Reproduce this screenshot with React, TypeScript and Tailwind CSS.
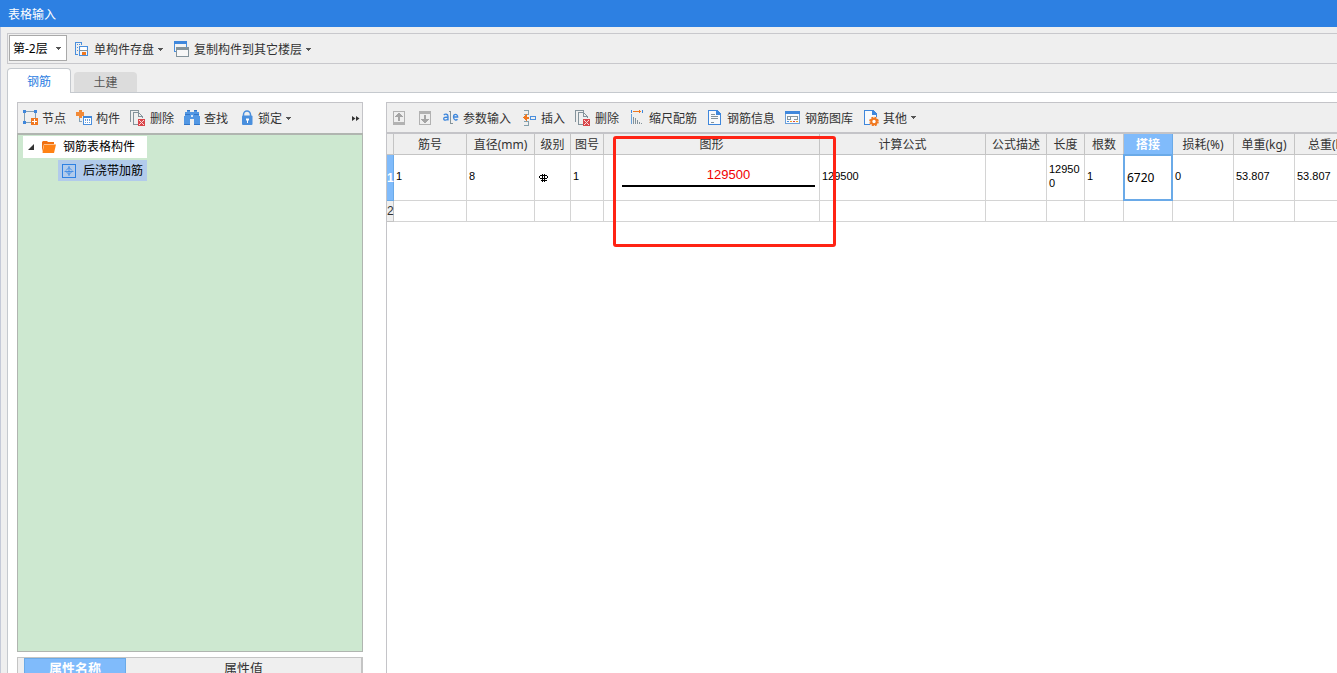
import type { ReactNode } from "react";

const Icon = ({ children }: { children: ReactNode }) => (
  <svg viewBox="0 0 16 16" className="size-4 shrink-0" shapeRendering="crispEdges" fill="none" aria-hidden="true">
    {children}
  </svg>
);

const Caret = () => (
  <svg viewBox="0 0 6 3" className="h-[3px] w-1.5 shrink-0" fill="#555" shapeRendering="crispEdges" aria-hidden="true">
    <path d="M0 0H5V1H4V2H3V3H2V2H1V1H0Z" />
  </svg>
);

const SaveIcon = () => (
  <Icon>
    <path d="M1.5 13.5V1.5H7.5V4M1.5 13.5H4" stroke="#4a8fdd" />
    <path d="M3 3h1v1H3zM3 6h1v1H3zM3 9h1v1H3zM5 3h1v1H5z" fill="#4a8fdd" />
    <path d="M5.5 5.5H13.5V14.5H5.5Z" fill="#f4f8fc" stroke="#4a8fdd" />
    <path d="M7 6H12V9H7Z" fill="#fff" />
    <path d="M5 9H14V10H5Z" fill="#84939b" />
    <path d="M8 11H12V14H8Z" fill="#f07820" />
  </Icon>
);

const CopyIcon = () => (
  <Icon>
    <path d="M.5 .5H12.5V10.5H.5Z" fill="#f4f4f4" stroke="#4a8fdd" />
    <path d="M0 0H13V3H0Z" fill="#3f87dc" />
    <path d="M2 6H15V16H2Z" fill="#efefef" />
    <path d="M2.5 6.5H14.5V15.5H2.5Z" fill="#f7f7f7" stroke="#84939b" />
    <path d="M2 6H15V9H2Z" fill="#84939b" />
  </Icon>
);

const NodeIcon = () => (
  <Icon>
    <path d="M2.5 1.5H13.5V8M2.5 1.5V12.5H9" stroke="#84a0b4" />
    <path d="M1 0H4V3H1ZM12 0H15V3H12ZM1 11H4V14H1Z" fill="#3f87dc" />
    <path d="M9 8H16V15H9Z" fill="#f07820" />
    <path d="M12 9H13V11H15V12H13V14H12V12H10V11H12Z" fill="#fff" />
  </Icon>
);

const ComponentIcon = () => (
  <Icon>
    <path d="M3 0H6V2H8V6H6V8H3V6H0V2H3Z" fill="#f28a38" />
    <path d="M3.5 8V11.5H6" stroke="#84a0b4" />
    <path d="M7.5 6.5H15.5V14.5H7.5Z" fill="#fff" stroke="#4a8fdd" />
    <path d="M7 6H16V8H7Z" fill="#3f87dc" />
    <path d="M9 9h1v2H9zM11 9h1v2h-1zM13 9h1v2h-1zM9 12h1v1H9zM11 12h1v1h-1zM13 12h1v1h-1z" fill="#6b9fda" />
  </Icon>
);

const DeleteIcon = () => (
  <Icon>
    <path d="M.5 11.5V.5H8.5V2" stroke="#84939b" />
    <path d="M3.5 14.5V2.5H8.5L12.5 6.5V8M3.5 14.5H8" stroke="#84939b" />
    <path d="M8.5 2.5V6.5H12.5" stroke="#84939b" />
    <path d="M8 9H15V16H8Z" fill="#d9454a" />
    <path d="M9 10h1v1h1v1h1v-1h1v-1h1v1h-1v1h-1v1h1v1h1v1h-1v-1h-1v-1h-1v1h-1v1H9v-1h1v-1h1v-1h-1v-1H9z" fill="#f8dcdc" />
  </Icon>
);

const FindIcon = () => (
  <Icon>
    <path d="M3 0H6V2H10V0H13V2H15V6H16V15H10V9H6V15H0V6H1V2H3Z" fill="#5297e3" />
    <path d="M7 5H9V7H7Z" fill="#d6e6f8" />
    <path d="M3 0H6V1H3ZM10 0H13V1H10ZM1 4H6V5H1ZM10 4H15V5H10Z" fill="#3276c8" />
    <path d="M0 14H6V15H0ZM10 14H16V15H10Z" fill="#3276c8" />
  </Icon>
);

const LockIcon = () => (
  <svg viewBox="0 0 16 16" className="size-4 shrink-0" fill="none" aria-hidden="true">
    <path d="M5.5 7V4.5a3.5 3.5 0 0 1 7 0V7" stroke="#4a8fdd" strokeWidth="1.5" />
    <rect x="4" y="5.5" width="10.5" height="9.5" rx="1" fill="#4a8fdd" />
    <path d="M8 8.5h3v2H10v2.5H9v-2.5H8z" fill="#fff" />
  </svg>
);

const ArrowIcon = ({ down = false }: { down?: boolean }) => (
  <Icon>
    <path d="M2.5 1.5H13.5V14.5H2.5Z" stroke="#b2b2b2" />
    {down ? (
      <>
        <path d="M2 1H14V4H2Z" fill="#b2b2b2" />
        <path d="M7 5H9V9H12V10H11V11H10V12H9V13H7V12H6V11H5V10H4V9H7Z" fill="#a5a5a5" />
      </>
    ) : (
      <>
        <path d="M2 12H14V15H2Z" fill="#b2b2b2" />
        <path d="M7 3H9V4H10V5H11V6H12V7H9V11H7V7H4V6H5V5H6V4H7Z" fill="#a5a5a5" />
      </>
    )}
  </Icon>
);

const ParamIcon = () => (
  <svg viewBox="0 0 16 16" className="size-4 shrink-0" fill="none" aria-hidden="true">
    <path d="M.8 5C2 3.8 5 3.8 5 6.2V10.5M5 7C2 7 .7 7.5 .7 8.8c0 2 3.3 1.7 4.3-.3" stroke="#3f87dc" strokeWidth="1.3" />
    <path d="M10.5 7h4.2c0-3.4-4.2-3.4-4.2 0 0 3.4 3 3.4 4 2.3" stroke="#3f87dc" strokeWidth="1.3" />
    <path d="M6 1.5H7.5V13.5M9.5 13.5H7.5" stroke="#84939b" shapeRendering="crispEdges" />
  </svg>
);

const InsertIcon = () => (
  <Icon>
    <path d="M3 .5H7.5V4.5H3M3 11.5H7.5V15.5H3" stroke="#84a0ac" />
    <path d="M2 7H3V6H4V5H5V4H6V7H8V9H6V11H5V10H4V9H3V8H2Z" fill="#f07820" />
    <path d="M9.5 6.5H14.5V9.5H9.5Z" stroke="#4a8fdd" />
  </Icon>
);

const ScaleIcon = () => (
  <Icon>
    <path d="M2.5 0V3M13.5 0V3" stroke="#3f87dc" />
    <path d="M4 1H10V0H11V1H12V2H11V3H10V2H4Z" fill="#f07820" />
    <path d="M4.5 7V14M6.5 8V14M8.5 10V14M10.5 12V14M12.5 13V14" stroke="#84939b" />
    <path d="M2.5 4V14" stroke="#6aa0d8" />
  </Icon>
);

const InfoIcon = () => (
  <Icon>
    <path d="M1.5 .5H9.5L13.5 4.5V14.5H1.5Z" fill="#f8fafc" stroke="#3f87dc" />
    <path d="M9 0H10L14 4V5H9Z" fill="#3f87dc" />
    <path d="M4 4.5H8M4 6.5H11M4 8.5H11M4 12.5H7" stroke="#84939b" />
  </Icon>
);

const LibraryIcon = () => (
  <Icon>
    <path d="M.5 1.5H14.5V13.5H.5Z" fill="#f8fafc" stroke="#6b9fda" />
    <path d="M0 1H15V4H0Z" fill="#3f87dc" />
    <path d="M2 9.5H5.5V6.5H2.5V9M5 6.5H12.5V9.5H9" stroke="#84939b" />
    <path d="M2 11H4V12H2Z" fill="#4a8fdd" />
    <path d="M5 11H7V12H5ZM11 11H13V12H11Z" fill="#f0a020" />
    <path d="M8 11H10V12H8Z" fill="#d9454a" />
  </Icon>
);

const OtherIcon = () => (
  <svg viewBox="0 0 16 16" className="size-4 shrink-0" fill="none" aria-hidden="true">
    <g shapeRendering="crispEdges">
      <path d="M7 14.5H1.5V.5H9.5L13.5 4.5V7" fill="#f8fafc" stroke="#3f87dc" />
      <path d="M9 0H10L14 4V5H9Z" fill="#3f87dc" />
    </g>
    <circle cx="11" cy="11.5" r="4" stroke="#f07820" strokeWidth="1.6" strokeDasharray="2 1.14" />
    <circle cx="11" cy="11.5" r="2.7" fill="#fff" stroke="#f07820" strokeWidth="2" />
  </svg>
);

const RebarGradeIcon = () => (
  <svg viewBox="0 0 10 10" className="mt-1 ml-0.5 size-2.5" fill="none" stroke="#000" shapeRendering="crispEdges" role="img" aria-label="钢筋级别">
    <path d="M1 2.5H8M1 5.5H8M.5 3V5M8.5 3V5M3.5 1V9M5.5 1V9M2 7.5H8" />
  </svg>
);

const ToolButton = ({ icon, label, menu = false }: { icon: ReactNode; label: string; menu?: boolean }) => (
  <button type="button" className="flex shrink-0 items-center gap-1 whitespace-nowrap text-[#333]">
    {icon}
    <span className="pt-0.5">{label}</span>
    {menu && <Caret />}
  </button>
);

const columns = [
  { name: "筋号", width: "w-[73px]", value: "1" },
  { name: "直径(mm)", width: "w-[68px]", value: "8" },
  { name: "级别", width: "w-[36px]", value: "" },
  { name: "图号", width: "w-[33px]", value: "1" },
  { name: "图形", width: "w-[216px]", value: "129500" },
  { name: "计算公式", width: "w-[166px]", value: "129500" },
  { name: "公式描述", width: "w-[61px]", value: "" },
  { name: "长度", width: "w-[38px]", value: "129500" },
  { name: "根数", width: "w-[39px]", value: "1" },
  { name: "搭接", width: "w-[49px]", value: "6720" },
  { name: "损耗(%)", width: "w-[61px]", value: "0" },
  { name: "单重(kg)", width: "w-[61px]", value: "53.807" },
  { name: "总重(kg)", width: "w-[72px]", value: "53.807" },
];

const CellContent = ({ name, value }: { name: string; value: string }) => {
  if (name === "级别") return <RebarGradeIcon />;
  if (name === "图形")
    return (
      <div className="ml-4 border-b-2 border-black pt-0.5 pb-0.5 pl-5 text-center text-[13px] leading-4 text-[#f00000]">{value}</div>
    );
  if (name === "搭接")
    return (
      <input
        aria-label="搭接"
        defaultValue={value}
        className="absolute -top-px -left-px h-[47px] w-[50px] border-2 border-[#6aaae8] bg-white px-0.5 font-['Noto_Sans'] text-[12px] text-black outline-none"
      />
    );
  return <>{value}</>;
};

export default function App() {
  return (
    <div className="flex h-screen flex-col overflow-hidden bg-[#efefef] font-['Noto_Sans','Noto_Sans_CJK_SC',sans-serif] text-[12px] leading-4 text-[#333]">
      <header className="flex h-[27px] shrink-0 items-center bg-[#2d80e2] px-2 pt-0.5 text-white">
        <h1>表格输入</h1>
      </header>

      <div className="flex min-h-0 flex-1 flex-col border-l border-[#c5cad8] pt-1.5 pl-1.5">
        <div className="flex h-[31px] shrink-0 items-center gap-2.5 border-y border-l border-[#c8c8cc] pt-px pl-px">
          <div className="relative -mr-[3px] flex h-[26px] w-[58px] shrink-0 items-center self-start">
            <select aria-label="楼层" className="size-full appearance-none border border-[#a9a9a9] bg-white pt-0.5 pl-[3px] text-black outline-none">
              <option>第-2层</option>
            </select>
            <span className="pointer-events-none absolute right-[5px] flex">
              <Caret />
            </span>
          </div>
          <ToolButton icon={<SaveIcon />} label="单构件存盘" menu />
          <ToolButton icon={<CopyIcon />} label="复制构件到其它楼层" menu />
        </div>

        <div role="tablist" className="flex h-[29px] shrink-0 items-end pt-1">
          <button type="button" role="tab" aria-selected="true" className="h-[25px] w-16 rounded-t-sm border-x border-t border-[#c5c9ce] bg-white pt-0.5 text-[#2d80e2]">
            钢筋
          </button>
          <div className="flex h-full flex-1 items-end border-b border-[#c5c9ce] pl-[3px]">
            <button type="button" role="tab" aria-selected="false" className="h-5 w-[63px] rounded-t-sm bg-[#dcdcdc] pt-0.5 text-[#555]">
              土建
            </button>
          </div>
        </div>

        <main className="flex min-h-0 flex-1 gap-[23px] border-l border-[#c5c9ce] bg-white pt-[9px] pl-[9px]">
          <section className="flex w-[346px] shrink-0 flex-col">
            <div className="flex h-[31px] shrink-0 items-center gap-2.5 border border-b-0 border-[#c4c4c8] bg-[#efefef] pr-0.5 pl-1">
              <ToolButton icon={<NodeIcon />} label="节点" />
              <ToolButton icon={<ComponentIcon />} label="构件" />
              <ToolButton icon={<DeleteIcon />} label="删除" />
              <ToolButton icon={<FindIcon />} label="查找" />
              <ToolButton icon={<LockIcon />} label="锁定" menu />
              <button type="button" aria-label="更多" className="ml-auto">
                <svg viewBox="0 0 8 5" className="h-[5px] w-2" fill="#333" aria-hidden="true">
                  <path d="M0 0L3.5 2.5L0 5ZM4 0L7.5 2.5L4 5Z" />
                </svg>
              </button>
            </div>

            <div role="tree" className="flex flex-1 flex-col items-start gap-0.5 border border-t-2 border-[#b0b5b0] bg-[#cde8d0] pt-px pl-[5px] text-black">
              <div role="treeitem" aria-expanded="true" className="flex h-[22px] items-center bg-white pr-3 pl-1">
                <svg viewBox="0 0 8 8" className="mr-1.5 size-2" fill="#333" aria-hidden="true">
                  <path d="M7 1V7H1Z" />
                </svg>
                <svg viewBox="0 0 16 16" className="mr-1.5 size-4" aria-hidden="true">
                  <path d="M1 13V3L2 2H6L7 3H13V5H3Z" fill="#f07010" />
                  <path d="M3 5.5H15L13 14H1.5Z" fill="#ff8214" />
                </svg>
                钢筋表格构件
              </div>
              <div role="treeitem" aria-selected="true" className="ml-[35px] flex h-[21px] items-center gap-[7px] bg-[#b2cbeb] pr-1 pl-1">
                <svg viewBox="0 0 14 14" className="size-3.5" fill="none" stroke="#2d80e2" aria-hidden="true">
                  <rect x=".5" y=".5" width="13" height="13" />
                  <path d="M7 2V12M2.5 7.5H11.5M4 6.5L7 3.5L10 6.5M4.5 8L7 10.5L9.5 8" strokeWidth=".8" />
                </svg>
                后浇带加筋
              </div>
            </div>

            <div className="mt-[5px] h-4 shrink-0 overflow-hidden border-x border-t border-[#c4c4c4] bg-[#efefef]">
              <table className="w-full table-fixed border-separate border-spacing-0 text-[13px]">
                <thead>
                  <tr className="h-[19px]">
                    <td className="w-1.5 p-0" />
                    <th scope="col" className="w-[102px] border border-[#6aaae8] bg-[#80bbfb] p-0 font-bold text-white">属性名称</th>
                    <th scope="col" className="border-r border-[#c4c4c4] p-0 font-normal">属性值</th>
                  </tr>
                </thead>
              </table>
            </div>
          </section>

          <section className="flex min-w-0 flex-1 flex-col border-l border-[#c4c4c8]">
            <div className="flex h-8 shrink-0 items-center gap-2.5 overflow-hidden border-t border-b-2 border-[#c4c4c8] bg-[#efefef] pl-1">
              <button type="button" aria-label="上移">
                <ArrowIcon />
              </button>
              <button type="button" aria-label="下移">
                <ArrowIcon down />
              </button>
              <ToolButton icon={<ParamIcon />} label="参数输入" />
              <ToolButton icon={<InsertIcon />} label="插入" />
              <ToolButton icon={<DeleteIcon />} label="删除" />
              <ToolButton icon={<ScaleIcon />} label="缩尺配筋" />
              <ToolButton icon={<InfoIcon />} label="钢筋信息" />
              <ToolButton icon={<LibraryIcon />} label="钢筋图库" />
              <ToolButton icon={<OtherIcon />} label="其他" menu />
            </div>

            <div className="relative min-h-0 flex-1 overflow-hidden">
              <table className="w-[980px] table-fixed border-separate border-spacing-0">
                <colgroup>
                  <col className="w-[7px]" />
                  {columns.map((c) => (
                    <col key={c.name} className={c.width} />
                  ))}
                </colgroup>
                <thead>
                  <tr className="h-[21px] bg-[#efefef]">
                    <td className="border-r border-b border-[#c4c4c4] p-0" />
                    {columns.map((c) => (
                      <th
                        key={c.name}
                        scope="col"
                        className={
                          c.name === "搭接"
                            ? "border-r border-b border-[#6aaae8] bg-[#80bbfb] px-0 pt-0.5 pb-0 font-bold whitespace-nowrap text-white"
                            : "border-r border-b border-[#c4c4c4] px-0 pt-0.5 pb-0 font-normal whitespace-nowrap"
                        }
                      >
                        {c.name}
                      </th>
                    ))}
                  </tr>
                </thead>
                <tbody className="font-['Liberation_Sans',sans-serif] text-[11px] leading-[14px] text-black">
                  <tr className="h-[46px]">
                    <th scope="row" className="border-r border-b border-[#6aaae8] bg-[#80bbfb] p-0 text-[12px] font-bold text-white">1</th>
                    {columns.map((c) => (
                      <td key={c.name} className="relative border-r border-b border-[#d4d4d4] pt-0 pr-1 pb-[3px] pl-0.5 break-all">
                        <CellContent name={c.name} value={c.value} />
                      </td>
                    ))}
                  </tr>
                  <tr className="h-[21px]">
                    <th scope="row" className="border-r border-b border-[#c4c4c4] bg-[#efefef] p-0 text-[12px] font-normal text-[#333]">2</th>
                    {columns.map((c) => (
                      <td key={c.name} className="border-r border-b border-[#d4d4d4] p-0" />
                    ))}
                  </tr>
                </tbody>
              </table>
              <div className="pointer-events-none absolute top-0.5 left-[226px] h-[111px] w-[223px] rounded-[3px] border-3 border-[#ff2314]" />
            </div>
          </section>
        </main>
      </div>
    </div>
  );
}
